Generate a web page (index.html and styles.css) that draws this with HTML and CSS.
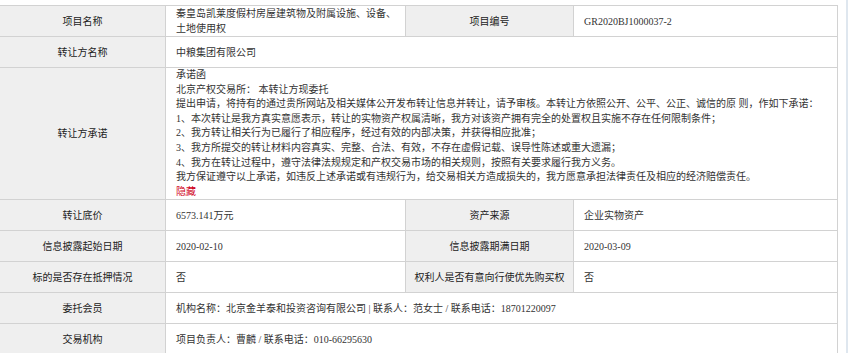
FILE: index.html
```html
<!DOCTYPE html>
<html lang="zh-CN">
<head>
<meta charset="utf-8">
<title>项目信息</title>
<link rel="stylesheet" href="styles.css">
</head>
<body>
<div class="page">
  <table class="info">
    <colgroup>
      <col class="c1"><col class="c2"><col class="c3"><col class="c4">
    </colgroup>
    <tr>
      <th>项目名称</th>
      <td class="name">秦皇岛凯莱度假村房屋建筑物及附属设施、设备、土地使用权</td>
      <th>项目编号</th>
      <td>GR2020BJ1000037-2</td>
    </tr>
    <tr>
      <th>转让方名称</th>
      <td colspan="3">中粮集团有限公司</td>
    </tr>
    <tr>
      <th>转让方承诺</th>
      <td colspan="3" class="promise">
        <div>承诺函</div>
        <div>北京产权交易所：&nbsp;本转让方现委托</div>
        <div>提出申请，将持有的通过贵所网站及相关媒体公开发布转让信息并转让，请予审核。本转让方依照公开、公平、公正、诚信的原 则，作如下承诺：</div>
        <div>1、本次转让是我方真实意愿表示，转让的实物资产权属清晰，我方对该资产拥有完全的处置权且实施不存在任何限制条件；</div>
        <div>2、我方转让相关行为已履行了相应程序，经过有效的内部决策，并获得相应批准；</div>
        <div>3、我方所提交的转让材料内容真实、完整、合法、有效，不存在虚假记载、误导性陈述或重大遗漏；</div>
        <div>4、我方在转让过程中，遵守法律法规规定和产权交易市场的相关规则，按照有关要求履行我方义务。</div>
        <div>我方保证遵守以上承诺，如违反上述承诺或有违规行为，给交易相关方造成损失的，我方愿意承担法律责任及相应的经济赔偿责任。</div>
        <div class="hide">隐藏</div>
      </td>
    </tr>
    <tr>
      <th>转让底价</th>
      <td>6573.141万元</td>
      <th>资产来源</th>
      <td>企业实物资产</td>
    </tr>
    <tr>
      <th>信息披露起始日期</th>
      <td>2020-02-10</td>
      <th>信息披露期满日期</th>
      <td>2020-03-09</td>
    </tr>
    <tr>
      <th>标的是否存在抵押情况</th>
      <td>否</td>
      <th>权利人是否有意向行使优先购买权</th>
      <td>否</td>
    </tr>
    <tr>
      <th>委托会员</th>
      <td colspan="3">机构名称：北京金羊泰和投资咨询有限公司 | 联系人：范女士 / 联系电话：18701220097</td>
    </tr>
    <tr>
      <th>交易机构</th>
      <td colspan="3">项目负责人：曹麟 / 联系电话：010-66295630</td>
    </tr>
  </table>
</div>
</body>
</html>
```

FILE: styles.css
```css
html, body {
  margin: 0;
  padding: 0;
  background: #fff;
}

body {
  font-family: "Liberation Serif", "Noto Sans CJK SC", serif;
  font-size: 10px;
  color: #333;
}

.page {
  width: 846px;
  padding-top: 5px;
  border-right: 2px solid #dfe7ef;
  min-height: 400px;
}

.info {
  border-collapse: collapse;
  width: 838px;
  margin-left: -1px;
  table-layout: fixed;
}

.c1 { width: 166px; }
.c2 { width: 240px; }
.c3 { width: 168px; }
.c4 { width: 264px; }

.info th,
.info td {
  border: 1px solid #d2d2d2;
  height: 30px;
  line-height: 15px;
  padding: 0 10px;
  vertical-align: middle;
}

.info th {
  background: #efefef;
  font-weight: normal;
  text-align: center;
  color: #222;
  padding: 0 4px;
}

.info td {
  background: #fff;
  text-align: left;
}

.info td.name {
  padding-right: 4px;
}

.info td.promise {
  line-height: 14.6px;
  padding-top: 0;
  padding-bottom: 0;
}

.promise div {
  white-space: nowrap;
}

.promise .hide {
  color: #d0021b;
}
```
